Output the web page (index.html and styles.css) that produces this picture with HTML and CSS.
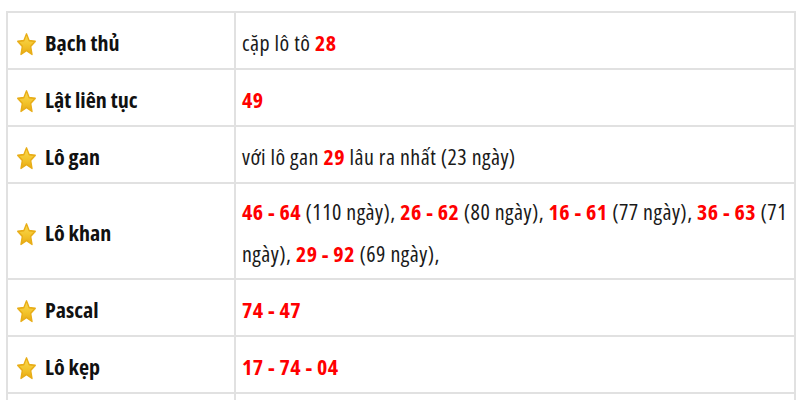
FILE: index.html
```html
<!DOCTYPE html>
<html lang="vi">
<head>
<meta charset="utf-8">
<link rel="stylesheet" href="styles.css">
</head>
<body>
<svg class="defs" width="0" height="0"><defs><linearGradient id="g" x1="0" y1="0" x2="0" y2="1"><stop offset="0" stop-color="#fbdc55"/><stop offset="0.6" stop-color="#f2c22a"/><stop offset="1" stop-color="#e6a915"/></linearGradient></defs></svg>
<table class="stats">
  <tr>
    <td class="label"><span class="star"><svg viewBox="0 0 20 20" preserveAspectRatio="none"><path d="M10 0.8 L12.8 6.6 L19.2 7.3 L14.4 11.7 L15.8 18.6 L10 15.3 L4.2 18.6 L5.6 11.7 L0.8 7.3 L7.2 6.6 Z" fill="url(#g)" stroke="#e8ad17" stroke-width="1.4" stroke-linejoin="round"/></svg></span>Bạch thủ</td>
    <td class="value">cặp lô tô <b>28</b></td>
  </tr>
  <tr>
    <td class="label"><span class="star"><svg viewBox="0 0 20 20" preserveAspectRatio="none"><path d="M10 0.8 L12.8 6.6 L19.2 7.3 L14.4 11.7 L15.8 18.6 L10 15.3 L4.2 18.6 L5.6 11.7 L0.8 7.3 L7.2 6.6 Z" fill="url(#g)" stroke="#e8ad17" stroke-width="1.4" stroke-linejoin="round"/></svg></span>Lật liên tục</td>
    <td class="value"><b>49</b></td>
  </tr>
  <tr>
    <td class="label"><span class="star"><svg viewBox="0 0 20 20" preserveAspectRatio="none"><path d="M10 0.8 L12.8 6.6 L19.2 7.3 L14.4 11.7 L15.8 18.6 L10 15.3 L4.2 18.6 L5.6 11.7 L0.8 7.3 L7.2 6.6 Z" fill="url(#g)" stroke="#e8ad17" stroke-width="1.4" stroke-linejoin="round"/></svg></span>Lô gan</td>
    <td class="value">với lô gan <b>29</b> lâu ra nhất (23 ngày)</td>
  </tr>
  <tr>
    <td class="label"><span class="star"><svg viewBox="0 0 20 20" preserveAspectRatio="none"><path d="M10 0.8 L12.8 6.6 L19.2 7.3 L14.4 11.7 L15.8 18.6 L10 15.3 L4.2 18.6 L5.6 11.7 L0.8 7.3 L7.2 6.6 Z" fill="url(#g)" stroke="#e8ad17" stroke-width="1.4" stroke-linejoin="round"/></svg></span>Lô khan</td>
    <td class="value"><b>46 - 64</b> (110 ngày), <b>26 - 62</b> (80 ngày), <b>16 - 61</b> (77 ngày), <b>36 - 63</b> (71 ngày), <b>29 - 92</b> (69 ngày),</td>
  </tr>
  <tr>
    <td class="label"><span class="star"><svg viewBox="0 0 20 20" preserveAspectRatio="none"><path d="M10 0.8 L12.8 6.6 L19.2 7.3 L14.4 11.7 L15.8 18.6 L10 15.3 L4.2 18.6 L5.6 11.7 L0.8 7.3 L7.2 6.6 Z" fill="url(#g)" stroke="#e8ad17" stroke-width="1.4" stroke-linejoin="round"/></svg></span>Pascal</td>
    <td class="value"><b>74 - 47</b></td>
  </tr>
  <tr>
    <td class="label"><span class="star"><svg viewBox="0 0 20 20" preserveAspectRatio="none"><path d="M10 0.8 L12.8 6.6 L19.2 7.3 L14.4 11.7 L15.8 18.6 L10 15.3 L4.2 18.6 L5.6 11.7 L0.8 7.3 L7.2 6.6 Z" fill="url(#g)" stroke="#e8ad17" stroke-width="1.4" stroke-linejoin="round"/></svg></span>Lô kẹp</td>
    <td class="value"><b>17 - 74 - 04</b></td>
  </tr>
  <tr>
    <td class="label"></td>
    <td class="value"></td>
  </tr>
</table>
</body>
</html>
```
FILE: styles.css
```css
html, body {
  margin: 0;
  padding: 0;
  background: #fff;
}
body {
  padding: 11px 0 0 6px;
  font-family: "Open Sans", "Noto Sans", sans-serif;
  font-size: 22px;
  font-stretch: 75%;
  color: #1a1a1a;
  overflow: hidden;
}
.defs {
  position: absolute;
}
.stats {
  border-collapse: collapse;
  width: 790px;
  table-layout: fixed;
}
.stats tr {
  height: 57px;
}
.stats td {
  border: 2px solid #e1e1e1;
  padding: 6px 7px 4px;
  line-height: 42px;
  vertical-align: middle;
}
.label {
  width: 210px;
  font-weight: bold;
  color: #111;
  padding-left: 9px !important;
}
.stats td.value {
  letter-spacing: 0.45px;
  padding-left: 6px;
  padding-right: 0;
}
.star {
  display: inline-block;
  width: 19px;
  height: 23px;
  margin-right: 9px;
  vertical-align: -5px;
}
.star svg {
  width: 19px;
  height: 23px;
  display: block;
}
.value b {
  color: #ff0000;
  font-weight: bold;
}
```
